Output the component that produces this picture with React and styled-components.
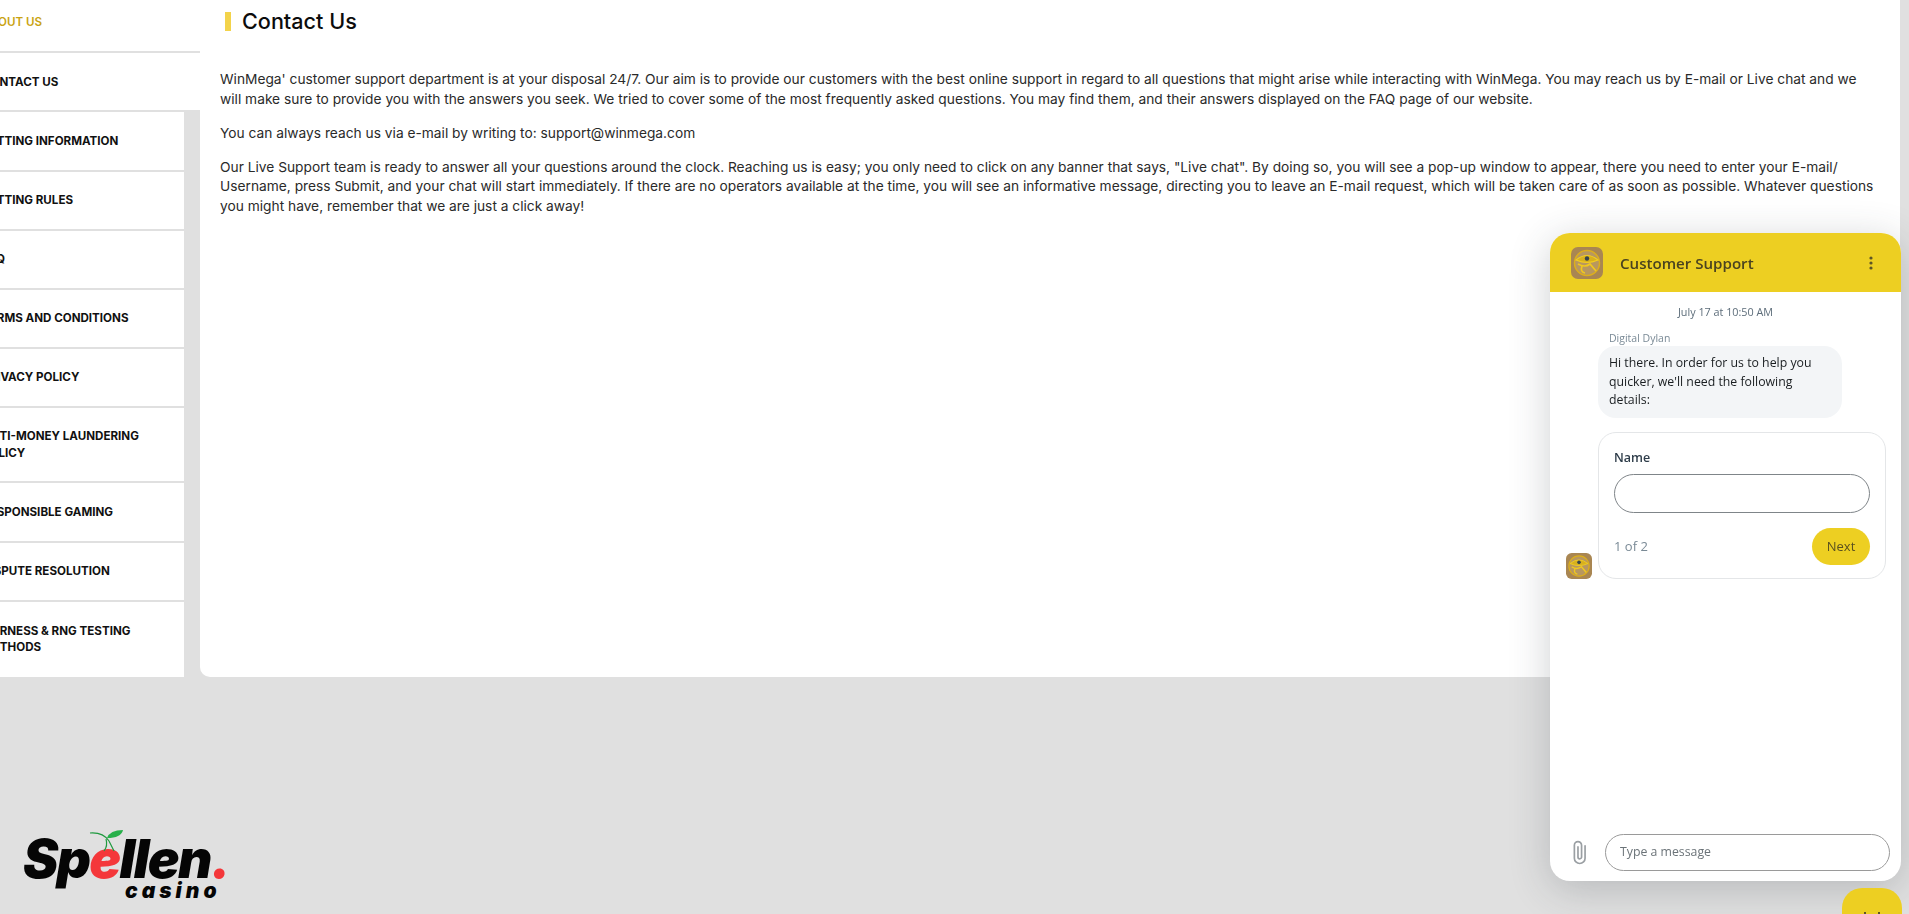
import React from 'react'
import styled, { createGlobalStyle } from 'styled-components'

const GlobalStyle = createGlobalStyle`
  html, body {
    margin: 0;
    height: 100%;
    overflow: hidden;
    background: #e0e0e0;
  }
  * { box-sizing: border-box; }
`

const menu = [
  { label: 'ABOUT US', active: true, wide: true },
  { label: 'CONTACT US', wide: true },
  { label: 'BETTING INFORMATION' },
  { label: 'BETTING RULES' },
  { label: 'FAQ' },
  { label: 'TERMS AND CONDITIONS' },
  { label: 'PRIVACY POLICY' },
  { label: 'ANTI-MONEY LAUNDERING\nPOLICY', tall: true },
  { label: 'RESPONSIBLE GAMING' },
  { label: 'DISPUTE RESOLUTION' },
  { label: 'FAIRNESS & RNG TESTING\nMETHODS', tall: true, last: true },
]

const Emblem = ({ size }) => (
  <svg width={size} height={size} viewBox="0 0 32 32">
    <rect width="32" height="32" rx="7" fill="#a98652" />
    <circle cx="16" cy="16" r="12.5" fill="#b8975f" stroke="#dcae1c" strokeWidth="1.5" />
    <path d="M5 13 Q16 4 27 13 Q16 18 5 13Z" fill="#d8b01e" stroke="#f2ce20" strokeWidth="1.1" />
    <circle cx="16" cy="11.5" r="2.2" fill="#36454d" />
    <path d="M7 17 Q14 21 19 17 L25 24 M11 19 Q9 25 14 26" fill="none" stroke="#f0c81f" strokeWidth="1.7" />
  </svg>
)

const App = () => (
  <>
    <GlobalStyle />
    <Page>
      <Sidebar>
        {menu.map((item) => (
          <MenuItem key={item.label} $active={item.active} $wide={item.wide} $tall={item.tall} $last={item.last}>
            {item.label}
          </MenuItem>
        ))}
      </Sidebar>
      <Content>
        <Heading>Contact Us</Heading>
        <Body>
          <p>WinMega' customer support department is at your disposal 24/7. Our aim is to provide our customers with the best online support in regard to all questions that might arise while interacting with WinMega. You may reach us by E-mail or Live chat and we will make sure to provide you with the answers you seek. We tried to cover some of the most frequently asked questions. You may find them, and their answers displayed on the FAQ page of our website.</p>
          <p>You can always reach us via e-mail by writing to: support@winmega.com</p>
          <p>Our Live Support team is ready to answer all your questions around the clock. Reaching us is easy; you only need to click on any banner that says, "Live chat". By doing so, you will see a pop-up window to appear, there you need to enter your E-mail/ Username, press Submit, and your chat will start immediately. If there are no operators available at the time, you will see an informative message, directing you to leave an E-mail request, which will be taken care of as soon as possible. Whatever questions you might have, remember that we are just a click away!</p>
        </Body>
      </Content>
    </Page>

    <Logo>
      <Cherry width="36" height="28" viewBox="0 0 36 28">
        <path d="M1 4 Q14 3 20 12 Q23 18 25 22" fill="none" stroke="#1f9a3f" strokeWidth="1.2" />
        <path d="M17 10 Q19 17 15 22" fill="none" stroke="#1f9a3f" strokeWidth="1.2" />
        <path d="M18 9 Q21 1 34 1 Q32 9 18 9Z" fill="#27b04a" />
      </Cherry>
      <LogoName>Sp<RedLetter>e</RedLetter>llen<RedLetter>.</RedLetter></LogoName>
      <LogoSub>casino</LogoSub>
    </Logo>

    <ChatWindow>
      <ChatHeader>
        <Emblem size={32} />
        <ChatTitle>Customer Support</ChatTitle>
        <MoreDots width="4" height="14" viewBox="0 0 4 14">
          <circle cx="2" cy="2" r="1.6" />
          <circle cx="2" cy="7" r="1.6" />
          <circle cx="2" cy="12" r="1.6" />
        </MoreDots>
      </ChatHeader>
      <ChatBody>
        <Timestamp>July 17 at 10:50 AM</Timestamp>
        <AgentName>Digital Dylan</AgentName>
        <Bubble>Hi there. In order for us to help you quicker, we'll need the following details:</Bubble>
        <FormRow>
          <Emblem size={26} />
          <FormCard>
            <FieldLabel>Name</FieldLabel>
            <NameInput />
            <FormFooter>
              <StepText>1 of 2</StepText>
              <NextButton>Next</NextButton>
            </FormFooter>
          </FormCard>
        </FormRow>
      </ChatBody>
      <Composer>
        <svg width="18" height="27" viewBox="0 0 16 24" fill="none" stroke="#9a9fa3" strokeWidth="1.5" strokeLinecap="round">
          <path d="M12.5 6 V17 A4.7 4.7 0 0 1 3 17 V5.5 A3.2 3.2 0 0 1 9.4 5.5 V16 A1.6 1.6 0 0 1 6.2 16 V7" />
        </svg>
        <MessageBox>Type a message</MessageBox>
      </Composer>
    </ChatWindow>

    <Launcher>
      <LauncherEyes />
    </Launcher>
  </>
)

const Page = styled.div`
  display: flex;
  align-items: flex-start;
  margin: -6px 9px 0 -40px;
  height: 683px;
`

const Sidebar = styled.nav`
  flex: 0 0 240px;
  height: 100%;
  display: flex;
  flex-direction: column;
`

const MenuItem = styled.div`
  width: ${(p) => (p.$wide ? '240px' : '224px')};
  flex: ${(p) => (p.$last ? '1' : 'none')};
  height: ${(p) => (p.$tall ? '75px' : '59.2px')};
  padding: 0 22px;
  display: flex;
  align-items: center;
  white-space: pre-line;
  background: #fff;
  border-bottom: ${(p) => (p.$last ? 'none' : '2px solid #e0e0e0')};
  color: ${(p) => (p.$active ? '#c9a312' : '#111')};
  font: ${(p) => (p.$active ? 600 : 700)} 11.6px/16.5px "Inter", sans-serif;
`

const Content = styled.main`
  flex: 1;
  height: 100%;
  background: #fff;
  border-radius: 0 0 0 10px;
  padding: 18px 24px 0 20px;
`

const Heading = styled.h1`
  margin: 0 0 0 5px;
  padding-left: 11px;
  border-left: 6px solid #f3d34a;
  color: #0c0c0c;
  font: 500 21.6px/19px "Inter", sans-serif;
`

const Body = styled.div`
  margin-top: 39px;
  color: #2a2a2a;
  font: 400 13.75px/19.7px "Inter", sans-serif;

  p {
    margin: 0 0 14.3px;
  }
`

const Logo = styled.div`
  position: absolute;
  left: 23px;
  top: 826px;
  width: 210px;
`

const Cherry = styled.svg`
  position: absolute;
  left: 66px;
  top: 3px;
`

const LogoName = styled.div`
  margin-top: 11px;
  color: #050505;
  font: italic 900 53px/44px "Inter", sans-serif;
  letter-spacing: -1.6px;
  white-space: nowrap;
`

const RedLetter = styled.span`
  color: #f4373a;
`

const LogoSub = styled.div`
  margin: 0 0 0 102px;
  color: #050505;
  font: italic 900 21px/20px "Inter", sans-serif;
  letter-spacing: 4px;
`

const ChatWindow = styled.section`
  position: fixed;
  left: 1550px;
  top: 233px;
  width: 351px;
  height: 648px;
  display: flex;
  flex-direction: column;
  background: #fff;
  border-radius: 20px;
  overflow: hidden;
  box-shadow: 0 8px 40px rgba(50, 60, 65, 0.24);
  font-family: "Open Sans", sans-serif;
`

const ChatHeader = styled.header`
  flex: 0 0 59px;
  display: flex;
  align-items: center;
  padding: 0 28px 0 21px;
  background: #edcf22;
`

const ChatTitle = styled.div`
  flex: 1;
  margin-left: 17px;
  color: #4a4320;
  font-size: 15.1px;
  font-weight: 600;
`

const MoreDots = styled.svg`
  fill: #5d5526;
`

const ChatBody = styled.div`
  flex: 1;
  padding: 12px 14px 0 16px;
`

const Timestamp = styled.div`
  text-align: center;
  color: #5d6d7a;
  font-size: 10.8px;
  line-height: 16px;
  margin-left: -2px;
`

const AgentName = styled.div`
  margin: 11px 0 0 43px;
  color: #7a8a96;
  font-size: 10.5px;
  line-height: 14px;
`

const Bubble = styled.div`
  width: 244px;
  margin: 1px 0 0 32px;
  padding: 8px 11px;
  border-radius: 18px;
  background: #f3f5f7;
  color: #1a1e21;
  font-size: 12.3px;
  line-height: 18.5px;
`

const FormRow = styled.div`
  display: flex;
  align-items: flex-end;
  gap: 6px;
  margin-top: 14px;
`

const FormCard = styled.div`
  width: 288px;
  padding: 16px 15px 13px;
  border: 1px solid #e4e6e8;
  border-radius: 18px;
`

const FieldLabel = styled.div`
  color: #2f3d4a;
  font-size: 12.5px;
  font-weight: 600;
  line-height: 17px;
`

const NameInput = styled.div`
  height: 39px;
  margin-top: 8px;
  border: 1.5px solid #7f8589;
  border-radius: 20px;
`

const FormFooter = styled.div`
  display: flex;
  align-items: center;
  justify-content: space-between;
  margin-top: 15px;
`

const StepText = styled.div`
  color: #7a8a96;
  font-size: 13px;
`

const NextButton = styled.div`
  width: 58px;
  height: 37px;
  border-radius: 19px;
  background: #edcf22;
  color: #5a5120;
  font-size: 13px;
  line-height: 37px;
  text-align: center;
`

const Composer = styled.div`
  flex: 0 0 auto;
  display: flex;
  align-items: center;
  gap: 16px;
  padding: 0 11px 10px 21px;
`

const MessageBox = styled.div`
  flex: 1;
  height: 37px;
  padding-left: 14px;
  border: 1.5px solid #9a9a9a;
  border-radius: 19px;
  color: #6b7378;
  font-size: 12.3px;
  line-height: 34px;
`

const Launcher = styled.div`
  position: fixed;
  left: 1842px;
  top: 888px;
  width: 60px;
  height: 60px;
  border-radius: 20px;
  background: #edcf22;
`

const LauncherEyes = styled.div`
  position: absolute;
  left: 22px;
  top: 24px;
  width: 16px;
  height: 6px;
  border-left: 2px solid #5d5526;
  border-right: 2px solid #5d5526;
`

export default App
